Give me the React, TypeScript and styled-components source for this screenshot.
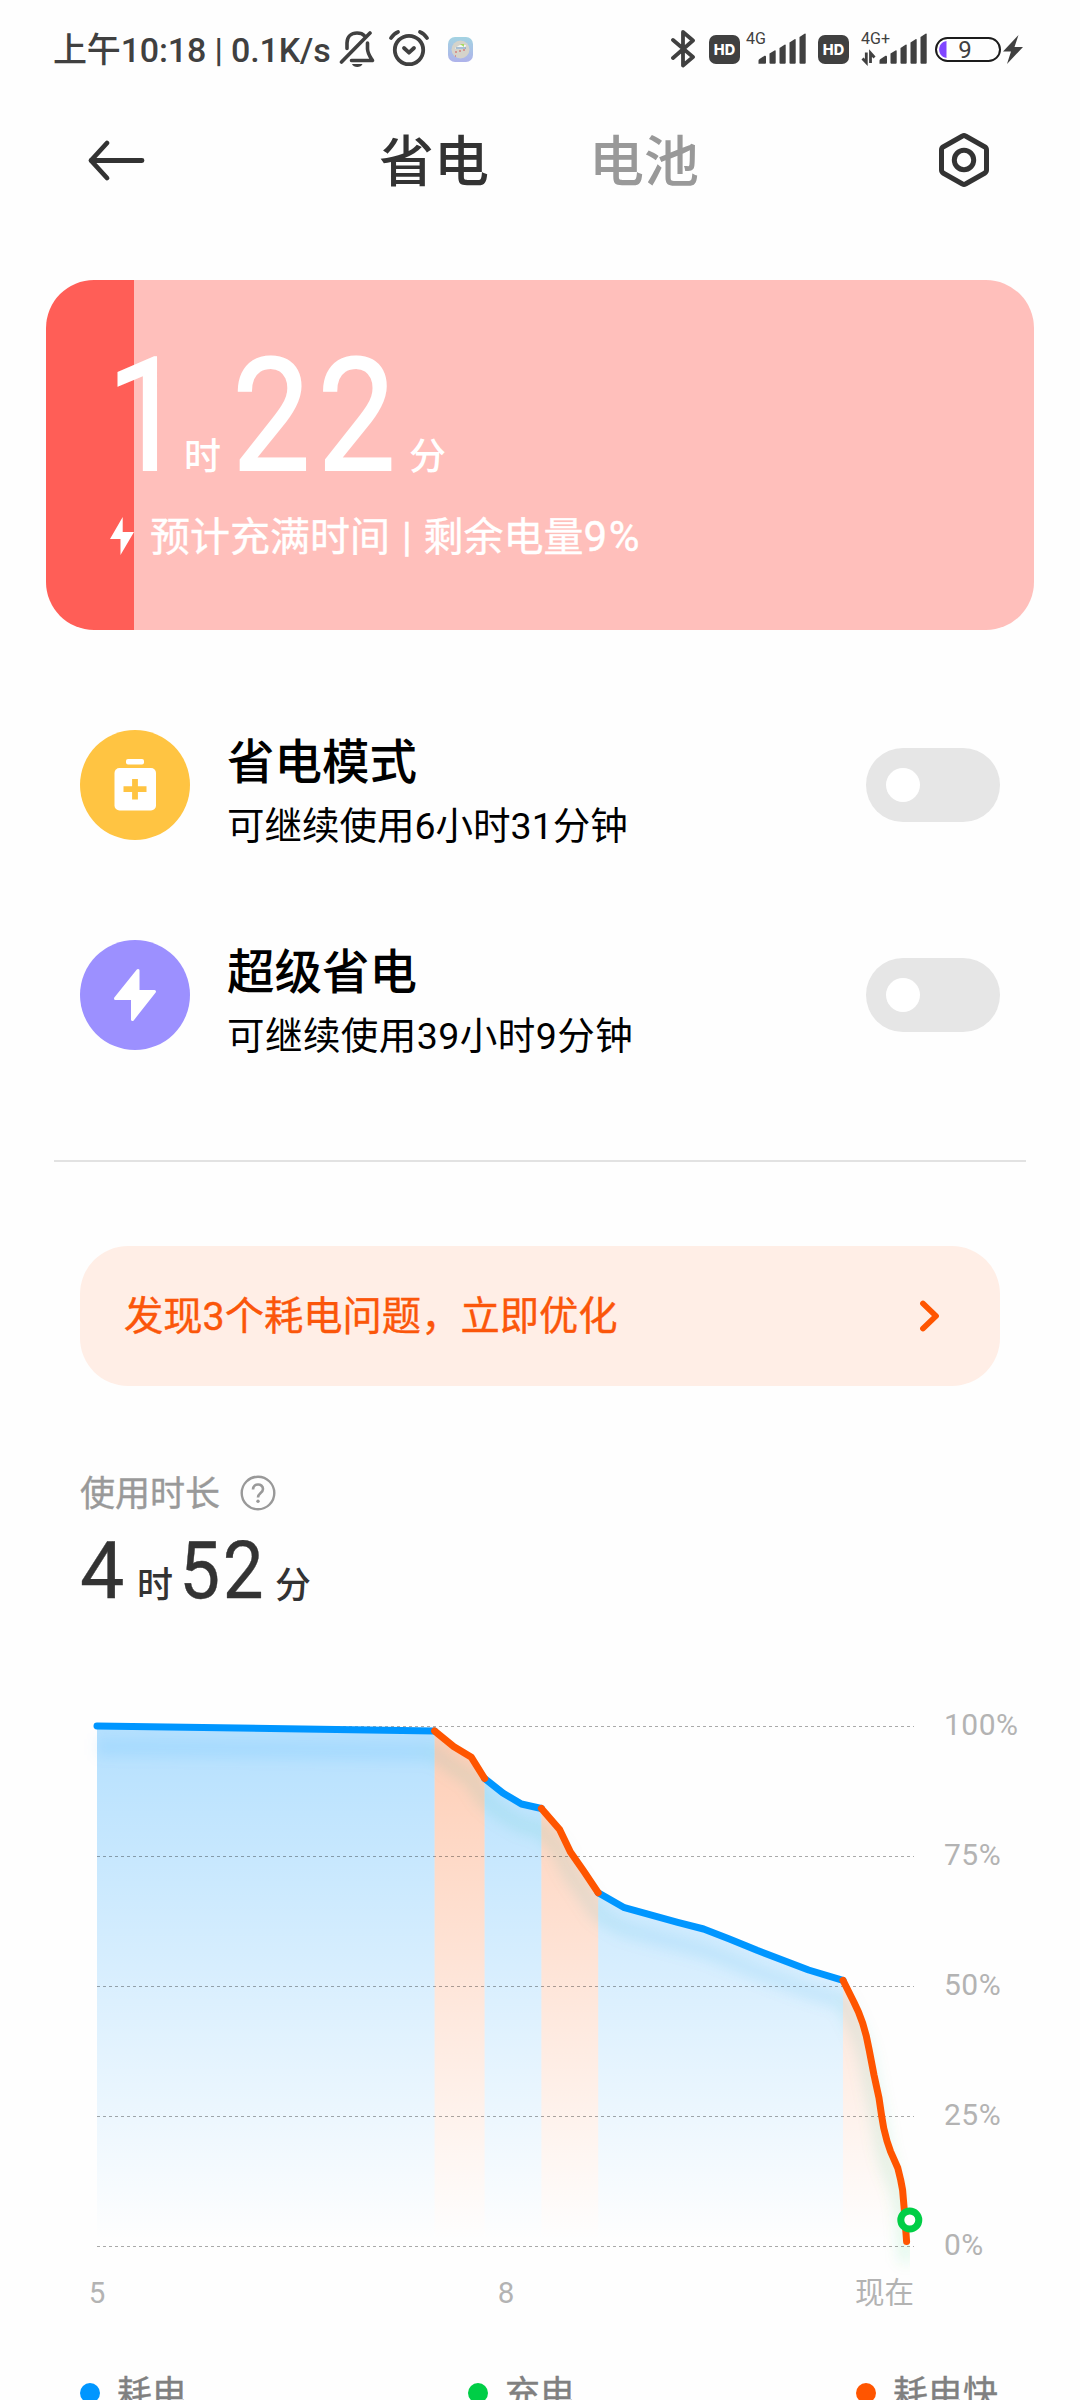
import React from "react";
import styled, { createGlobalStyle } from "styled-components";

const GlobalStyle = createGlobalStyle`
  *, *::before, *::after { box-sizing: border-box; }
  body { margin: 0; background: #fefefe; }
`;

const Page = styled.main`
  width: 1080px;
  height: 2400px;
  overflow: hidden;
  display: flex;
  flex-direction: column;
  background: #fefefe;
  color: #000;
  font-family: Roboto, "Noto Sans CJK SC", sans-serif;
  white-space: nowrap;
`;

const StatusBar = styled.div`
  height: 98px;
  flex: none;
  display: flex;
  align-items: center;
  justify-content: space-between;
  padding: 0 57px 0 53px;
  color: #404040;
`;

const StatusGroup = styled.div`
  display: flex;
  align-items: center;
  height: 40px;
`;

const StatusText = styled.span`
  width: 286px;
  padding-top: 1px;
  font-size: 34px;
  line-height: 40px;
  font-weight: 500;
  letter-spacing: -0.15px;
`;

const Spacer = styled.span<{ $w: number }>`
  flex: none;
  width: ${(p) => p.$w}px;
`;

const HdBadge = styled.span`
  width: 31px;
  height: 29px;
  border-radius: 7px;
  background: #404040;
  color: #fff;
  font: 800 14.5px/29px Inter, sans-serif;
  text-align: center;
`;

const SignalBox = styled.div`
  display: flex;
  flex-direction: column;
  height: 40px;
  position: relative;
`;

const NetworkLabel = styled.span`
  position: absolute;
  left: 0;
  top: 2px;
  font-size: 16px;
  line-height: 16px;
`;

const BatteryPill = styled.div`
  position: relative;
  width: 66px;
  height: 25px;
  border: 2px solid #1c1c1c;
  border-radius: 13px;
  font-size: 24px;
  line-height: 22px;
  text-align: center;
  padding-right: 6px;
`;

const Header = styled.header`
  height: 124px;
  flex: none;
  display: flex;
  align-items: center;
  padding-left: 85px;
`;

const Tab = styled.span<{ $active?: boolean; $left: number }>`
  width: 112px;
  margin-left: ${(p) => p.$left}px;
  padding-top: 3px;
  font-size: 55px;
  line-height: 80px;
  font-weight: 500;
  color: ${(p) => (p.$active ? "#333" : "#999")};
`;

const ChargeCard = styled.section`
  flex: none;
  width: 988px;
  height: 350px;
  margin: 58px 46px 0;
  padding: 56px 0 0 58px;
  border-radius: 48px;
  background: linear-gradient(to right, #ff5e57 88px, #ffbfbb 88px);
  color: #fff;
`;

const BigTime = styled.div`
  display: flex;
  align-items: baseline;
  height: 150px;
  line-height: 160px;
`;

const BigNumber = styled.span<{ $w: number; $indent: number }>`
  width: ${(p) => p.$w}px;
  font-size: 158px;
  letter-spacing: 7.9px;
  text-indent: ${(p) => p.$indent}px;
  transform: scaleX(0.88);
  transform-origin: left;
  -webkit-text-stroke: 1.8px currentColor;
`;

const BigUnit = styled.span<{ $w?: number }>`
  width: ${(p) => p.$w ?? 40}px;
  font-size: 37px;
  font-weight: 500;
`;

const ChargeInfo = styled.div`
  display: flex;
  align-items: center;
  height: 50px;
  margin-top: 25px;
  padding-left: 6px;
  gap: 16px;
  font-size: 40px;
  line-height: 50px;
  -webkit-text-stroke: 0.4px currentColor;
`;

const InfoText = styled.span`
  padding-top: 3px;
  word-spacing: 2px;
`;

const Percent = styled.span`
  font-size: 42px;
  letter-spacing: 1.5px;
`;

const ModeList = styled.section`
  flex: none;
  display: flex;
  flex-direction: column;
  gap: 100px;
  padding: 100px 80px 110px;
`;

const ModeRow = styled.div`
  display: flex;
  align-items: center;
  height: 110px;
`;

const ModeIcon = styled.div<{ $color: string }>`
  width: 110px;
  height: 110px;
  border-radius: 50%;
  background: ${(p) => p.$color};
`;

const ModeText = styled.div`
  flex: 1;
  padding: 17px 0 0 37px;
`;

const ModeTitle = styled.div`
  font-size: 47.5px;
  line-height: 64px;
  font-weight: 500;
`;

const ModeSub = styled.div<{ $tracking?: number }>`
  font-size: 37.5px;
  line-height: 62px;
  letter-spacing: ${(p) => p.$tracking ?? 0}px;
`;

const Toggle = styled.div`
  width: 134px;
  height: 74px;
  border-radius: 37px;
  padding: 20px;
  background: #e6e6e6;
`;

const Knob = styled.div`
  width: 34px;
  height: 34px;
  border-radius: 50%;
  background: #fff;
`;

const Divider = styled.hr`
  flex: none;
  width: 972px;
  height: 2px;
  margin: 0 54px;
  border: 0;
  background: #e2e2e2;
`;

const Notice = styled.section`
  flex: none;
  display: flex;
  align-items: center;
  justify-content: space-between;
  height: 140px;
  margin: 84px 80px 0;
  padding: 0 58px 0 44px;
  border-radius: 48px;
  background: #ffeee6;
  color: #fb560a;
  font-size: 39.3px;
`;

const NoticeText = styled.span`
  line-height: 50px;
  padding-top: 2px;
  -webkit-text-stroke: 0.4px currentColor;
`;

const UsageLabel = styled.div`
  flex: none;
  display: flex;
  align-items: center;
  gap: 20px;
  height: 36px;
  margin: 89px 80px 0;
  color: #999;
  font-size: 35px;
  line-height: 36px;
  & > span {
    padding-top: 4px;
    -webkit-text-stroke: 0.4px currentColor;
  }
`;

const Duration = styled.div`
  flex: none;
  display: flex;
  align-items: baseline;
  height: 80px;
  margin: 20px 0 0 80px;
  line-height: 80px;
  color: #333;
`;

const DurationNumber = styled.span<{ $w: number }>`
  width: ${(p) => p.$w}px;
  font-size: 79px;
  -webkit-text-stroke: 0.4px currentColor;
`;

const DurationMinutes = styled(DurationNumber)`
  letter-spacing: 3px;
  text-indent: -2px;
  transform: scaleX(0.92);
  transform-origin: left;
`;

const DurationUnit = styled.span<{ $w?: number }>`
  width: ${(p) => p.$w ?? 40}px;
  font-size: 36px;
  font-weight: 500;
`;

const ChartRow = styled.section`
  flex: none;
  display: flex;
  height: 580px;
  margin: 89px 0 0 80px;
`;

const YAxis = styled.div`
  display: flex;
  flex-direction: column;
  gap: 100px;
  padding: 10px 0 0 12px;
  color: #b3b3b3;
  font-size: 30px;
  line-height: 30px;
  letter-spacing: 0.5px;
`;

const XAxis = styled.div`
  flex: none;
  display: grid;
  grid-template-columns: 22px 796px 1fr;
  width: 828px;
  height: 30px;
  margin-left: 86px;
  color: #b3b3b3;
  font-size: 29.5px;
  line-height: 26px;
  text-align: center;
  & > :last-child { margin-left: -50px; text-align: right; }
`;

const Legend = styled.div`
  flex: none;
  display: grid;
  grid-template-columns: 388px 388px 1fr;
  margin: 63px 0 0 80px;
  color: #808080;
  font-size: 35px;
  line-height: 44px;
  -webkit-text-stroke: 0.4px currentColor;
`;

const LegendItem = styled.span<{ $color: string }>`
  display: flex;
  align-items: center;
  gap: 17px;
  &::before {
    content: "";
    width: 20px;
    height: 20px;
    margin-top: -4px;
    border-radius: 50%;
    background: ${(p) => p.$color};
  }
`;

const Signal = () => (
  <g fill="#404040">
    <path d="M0 34.7 v-3 q0 -1 1 -1.7 l5 -3.2 q1.5 -.6 1.5 1 v6 q0 1 -1 1 h-5.5z" />
    <path d="M11 33.7 V24.6 l5 -3.2 q1.2 -.6 1.2 .8 V33.7 q0 1 -1 1 h-4.2 q-1 0 -1 -1z" />
    <path d="M21 33.7 V19 l5 -3.2 q1.2 -.6 1.2 .8 V33.7 q0 1 -1 1 h-4.2 q-1 0 -1 -1z" />
    <path d="M31 33.7 V13.5 l5 -3.2 q1.2 -.6 1.2 .8 V33.7 q0 1 -1 1 h-4.2 q-1 0 -1 -1z" />
    <path d="M41 33.7 V8 l5 -3.2 q1.2 -.6 1.2 .8 V33.7 q0 1 -1 1 h-4.2 q-1 0 -1 -1z" />
  </g>
);

type Point = [number, number];
type Segment = { fast: boolean; points: Point[] };

const segments: Segment[] = [
  { fast: false, points: [[97, 1726], [434.6, 1731]] },
  { fast: true, points: [[434.6, 1731], [453.6, 1746.5], [471.4, 1757.3], [484.6, 1778.5]] },
  { fast: false, points: [[484.6, 1778.5], [502.9, 1793], [521.4, 1804], [541.4, 1808.5]] },
  { fast: true, points: [[541.4, 1808.5], [559.6, 1829.5], [570.4, 1852], [584, 1871.5], [598.2, 1892.7]] },
  {
    fast: false,
    points: [[598.2, 1892.7], [624.4, 1907.7], [677.7, 1922.3], [703.6, 1929], [729.4, 1939], [757, 1950.3], [808.6, 1970], [843, 1980.3]],
  },
  {
    fast: true,
    points: [[843, 1980.3], [853.7, 2001.7], [858.5, 2012], [862.7, 2023.3], [866.3, 2036], [869.2, 2050], [874, 2075], [879, 2098], [881.5, 2115], [883.7, 2128], [887, 2141], [890.6, 2151.7], [897.8, 2168], [900.7, 2180], [902.6, 2190], [904.3, 2210], [906.6, 2241.5]],
  },
];

const toLine = (pts: Point[]) => pts.map(([x, y]) => `${x},${y}`).join(" ");
const curve = segments.flatMap((s) => s.points);
const gridY = [1726.5, 1856.5, 1986.5, 2116.5, 2246.5];

const BatteryChart = () => (
  <svg width="852" height="580" viewBox="80 1700 852 580">
    <defs>
      <linearGradient id="slow" gradientUnits="userSpaceOnUse" x1="0" y1="1726" x2="0" y2="2240">
        <stop offset="0" stopColor="#0096ff" stopOpacity="0.29" />
        <stop offset="1" stopColor="#0096ff" stopOpacity="0" />
      </linearGradient>
      <linearGradient id="fast" gradientUnits="userSpaceOnUse" x1="0" y1="1726" x2="0" y2="2240">
        <stop offset="0" stopColor="#ff5500" stopOpacity="0.29" />
        <stop offset="1" stopColor="#ff5500" stopOpacity="0" />
      </linearGradient>
      <linearGradient id="glow" gradientUnits="userSpaceOnUse" x1="97" y1="0" x2="910" y2="0">
        <stop offset="0" stopColor="#0096ff" />
        <stop offset="0.38" stopColor="#0096ff" />
        <stop offset="0.44" stopColor="#00b49a" />
        <stop offset="0.56" stopColor="#00b49a" />
        <stop offset="0.68" stopColor="#0096e0" />
        <stop offset="0.9" stopColor="#0096e0" />
        <stop offset="0.96" stopColor="#00b46e" />
        <stop offset="1" stopColor="#00ce46" />
      </linearGradient>
      <filter id="soft" filterUnits="userSpaceOnUse" x="60" y="1690" width="900" height="620">
        <feGaussianBlur stdDeviation="7" />
      </filter>
      <clipPath id="left-of-now">
        <rect x="80" y="1700" width="830" height="600" />
      </clipPath>
    </defs>
    {segments.map((s, i) => {
      const first = s.points[0];
      const last = s.points[s.points.length - 1];
      return (
        <polygon
          key={i}
          points={`${toLine(s.points)} ${last[0]},2246 ${first[0]},2246`}
          fill={s.fast ? "url(#fast)" : "url(#slow)"}
        />
      );
    })}
    <g clipPath="url(#left-of-now)">
      <polyline
        points={toLine(curve.map(([x, y]) => [x, y + 21] as Point))}
        fill="none"
        stroke="url(#glow)"
        strokeWidth="16"
        strokeOpacity="0.1"
        filter="url(#soft)"
      />
    </g>
    {gridY.map((y) => (
      <line key={y} x1="97" x2="914" y1={y} y2={y} stroke="#000" strokeOpacity="0.33" strokeDasharray="3 3" />
    ))}
    {[false, true].map((fast) =>
      segments
        .filter((s) => s.fast === fast)
        .map((s) => (
          <polyline
            key={s.points[0][0]}
            points={toLine(s.points)}
            fill="none"
            stroke={fast ? "#ff5500" : "#0096ff"}
            strokeWidth="7"
            strokeLinecap="round"
            strokeLinejoin="round"
          />
        ))
    )}
    <circle cx="909.8" cy="2220" r="9" fill="#fff" stroke="#00ce46" strokeWidth="7" />
  </svg>
);

export default function App() {
  return (
    <Page>
      <GlobalStyle />
      <StatusBar>
        <StatusGroup>
          <StatusText>上午10:18 | 0.1K/s</StatusText>
          <svg width="36" height="40" viewBox="0 0 36 40" fill="none" stroke="#404040" strokeWidth="3.6" strokeLinecap="round" strokeLinejoin="round">
            <path d="M2.5 33 L31 4" />
            <path d="M8 19.5 V14 C8 7.5 12.5 4 18 4 C21.5 4 24 5 25.5 6.8" />
            <path d="M28.5 14 V20 C28.8 25 31 27.5 33.5 31.5 H12.5" />
            <path d="M13 35 h10.5 c-1.2 4 -9.3 4 -10.5 0z" fill="#404040" stroke="none" />
          </svg>
          <Spacer $w={13} />
          <svg width="42" height="40" viewBox="0 0 42 40" fill="none" stroke="#404040" strokeWidth="3.8" strokeLinecap="round" strokeLinejoin="round">
            <circle cx="21" cy="21" r="14.2" />
            <path d="M3 9 Q6 4.5 10 3" />
            <path d="M39 9 Q36 4.5 32 3" />
            <path d="M16 19 L21 23.7 L26 19" />
          </svg>
          <Spacer $w={18} />
          <svg width="25" height="25" viewBox="0 0 25 25">
            <defs>
              <linearGradient id="app" x1="0" y1="0" x2="0" y2="1">
                <stop offset="0" stopColor="#a3d3e2" />
                <stop offset="1" stopColor="#aeb2ea" />
              </linearGradient>
            </defs>
            <rect width="25" height="25" rx="7" fill="url(#app)" />
            <circle cx="12.5" cy="12.5" r="9" fill="#d5d3ca" />
            <path d="M7 11 l5 -3 h6 l-1 4 h-9z" fill="#f5f8f4" />
            <path d="M12 7 l4 0 l0 3z" fill="#a6dc62" />
            <path d="M8 11 h10" stroke="#5c86b4" />
            <path d="M7 15 h2 M11 14 h2 M7 19 h1 M15 13 h2" stroke="#d65858" strokeWidth="1.2" />
          </svg>
        </StatusGroup>
        <StatusGroup>
          <svg width="26" height="40" viewBox="0 0 26 40" fill="none" stroke="#404040" strokeWidth="3.8" strokeLinecap="round" strokeLinejoin="round">
            <path d="M2 11 L22 28 L12 36.5 V3 L22 11.5 L2 29" />
          </svg>
          <Spacer $w={12} />
          <HdBadge>HD</HdBadge>
          <Spacer $w={6} />
          <SignalBox>
            <NetworkLabel>4G</NetworkLabel>
            <svg width="61" height="40" viewBox="-12.5 0 61 40">
              <Signal />
            </svg>
          </SignalBox>
          <Spacer $w={11} />
          <HdBadge>HD</HdBadge>
          <Spacer $w={12} />
          <SignalBox>
            <NetworkLabel>4G+</NetworkLabel>
            <svg width="67" height="40" viewBox="-18.5 0 67 40">
              <Signal />
              <path d="M-13.2 23.5 V33.5 L-17 29.5 M-9 34 V24 L-5 28.5" fill="none" stroke="#404040" strokeWidth="2.8" />
            </svg>
          </SignalBox>
          <Spacer $w={7} />
          <BatteryPill>
            <svg style={{ position: "absolute", left: 2, top: 2 }} width="8" height="17" viewBox="0 0 8 17">
              <path d="M7.5 0 V17 C-2.3 15.5 -2.3 1.5 7.5 0z" fill="#8046ff" />
            </svg>
            9
          </BatteryPill>
          <Spacer $w={2} />
          <svg width="20" height="29" viewBox="0 0 20 29">
            <path d="M15.5 0 L0 16.5 H8 L4 29 L20 12 H11.5z" fill="#404040" />
          </svg>
        </StatusGroup>
      </StatusBar>

      <Header>
        <svg width="62" height="44" viewBox="0 0 62 44" fill="none" stroke="#333" strokeWidth="4.8" strokeLinecap="round" strokeLinejoin="round">
          <path d="M57 22.5 H6 M22 5 L6 22.5 L22 40" />
        </svg>
        <Tab $active $left={232}>省电</Tab>
        <Tab $left={98}>电池</Tab>
        <Spacer $w={235} />
        <svg width="56" height="60" viewBox="0 0 56 60" fill="none" stroke="#333" strokeWidth="5" strokeLinejoin="round">
          <path d="M26.5 6 Q28 5 29.5 6 L48.5 16.7 Q50.5 18 50.5 20 V40 Q50.5 42 48.5 43.3 L29.5 54 Q28 55 26.5 54 L7.5 43.3 Q5.5 42 5.5 40 V20 Q5.5 18 7.5 16.7z" />
          <circle cx="28" cy="30" r="9.7" />
        </svg>
      </Header>

      <ChargeCard>
        <BigTime>
          <BigNumber $w={80} $indent={3}>1</BigNumber>
          <BigUnit $w={47}>时</BigUnit>
          <BigNumber $w={178} $indent={1.5}>22</BigNumber>
          <BigUnit>分</BigUnit>
        </BigTime>
        <ChargeInfo>
          <svg width="24" height="38" viewBox="0 0 24 38">
            <path d="M12.7 0 L0 22 H10.5 V38 L24 15 H12.7z" fill="#fff" />
          </svg>
          <InfoText>
            预计充满时间 | 剩余电量<Percent>9%</Percent>
          </InfoText>
        </ChargeInfo>
      </ChargeCard>

      <ModeList>
        <ModeRow>
          <ModeIcon $color="#ffc442">
            <svg width="110" height="110" viewBox="0 0 110 110">
              <rect x="46" y="29" width="18" height="5.5" rx="2" fill="#fff" />
              <rect x="34.5" y="38" width="41.5" height="42.5" rx="5" fill="#fff" />
              <path d="M55 49 V69.5 M43.5 59.2 H66.5" stroke="#ffc442" strokeWidth="5.8" />
            </svg>
          </ModeIcon>
          <ModeText>
            <ModeTitle>省电模式</ModeTitle>
            <ModeSub>可继续使用6小时31分钟</ModeSub>
          </ModeText>
          <Toggle><Knob /></Toggle>
        </ModeRow>
        <ModeRow>
          <ModeIcon $color="#9c90ff">
            <svg width="110" height="110" viewBox="0 0 110 110">
              <path d="M58 30.5 V51.5 H74.5 L52.5 79.5 V58.5 H35.5z" fill="#fff" stroke="#fff" strokeWidth="3" strokeLinejoin="round" />
            </svg>
          </ModeIcon>
          <ModeText>
            <ModeTitle>超级省电</ModeTitle>
            <ModeSub $tracking={0.45}>可继续使用39小时9分钟</ModeSub>
          </ModeText>
          <Toggle><Knob /></Toggle>
        </ModeRow>
      </ModeList>

      <Divider />

      <Notice>
        <NoticeText>发现3个耗电问题，立即优化</NoticeText>
        <svg width="24" height="34" viewBox="0 0 24 34" fill="none" stroke="#ff5500" strokeWidth="5.8" strokeLinecap="round" strokeLinejoin="round">
          <path d="M5 4.5 L18 17 L5 29.5" />
        </svg>
      </Notice>

      <UsageLabel>
        <span>使用时长</span>
        <svg width="36" height="36" viewBox="0 0 36 36" fill="none" stroke="#999" strokeWidth="2.4">
          <circle cx="18" cy="18" r="16.3" />
          <path d="M13 14.5 C13 8 23 8 23 14 C23 18 18 18 18 22.5" strokeWidth="2.6" />
          <circle cx="18" cy="26.3" r="1.7" fill="#999" stroke="none" />
        </svg>
      </UsageLabel>
      <Duration>
        <DurationNumber $w={57}>4</DurationNumber>
        <DurationUnit $w={44}>时</DurationUnit>
        <DurationMinutes $w={94}>52</DurationMinutes>
        <DurationUnit>分</DurationUnit>
      </Duration>

      <ChartRow>
        <BatteryChart />
        <YAxis>
          {["100%", "75%", "50%", "25%", "0%"].map((t) => (
            <span key={t}>{t}</span>
          ))}
        </YAxis>
      </ChartRow>
      <XAxis>
        <span>5</span>
        <span>8</span>
        <span>现在</span>
      </XAxis>

      <Legend>
        <LegendItem $color="#0096ff">耗电</LegendItem>
        <LegendItem $color="#00ce46">充电</LegendItem>
        <LegendItem $color="#ff5500">耗电快</LegendItem>
      </Legend>
    </Page>
  );
}
